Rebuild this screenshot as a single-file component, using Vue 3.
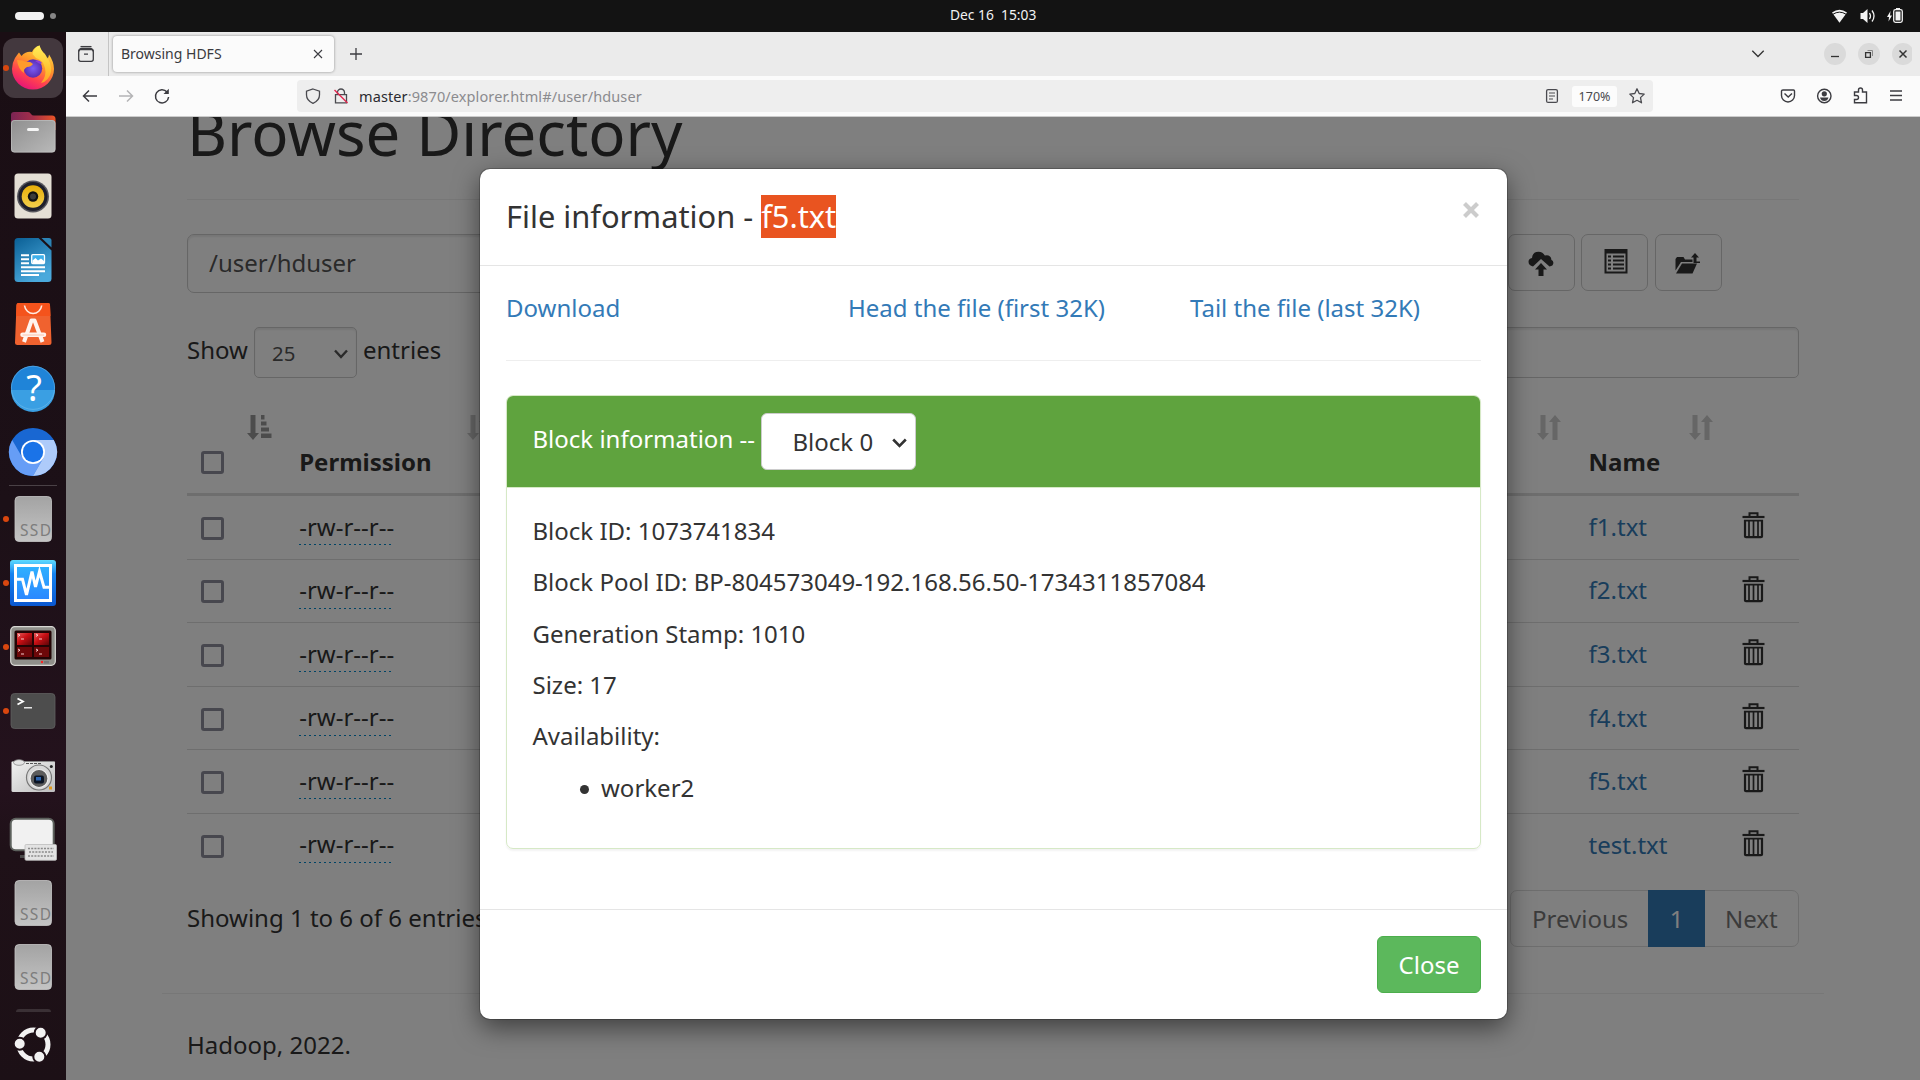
<script setup>
const rows = ['f1.txt', 'f2.txt', 'f3.txt', 'f4.txt', 'f5.txt', 'test.txt']
const info = [
  'Block ID: 1073741834',
  'Block Pool ID: BP-804573049-192.168.56.50-1734311857084',
  'Generation Stamp: 1010',
  'Size: 17',
  'Availability:',
]
const links = ['Download', 'Head the file (first 32K)', 'Tail the file (last 32K)']
const dockTop = ['firefox', 'files', 'rhythmbox', 'writer', 'software', 'help', 'chromium']
const dockBottom = ['ssd', 'vbox', 'terminator', 'terminal', 'camera', 'remote', 'ssd', 'ssd']
const running = ['firefox', 'vbox', 'terminator', 'terminal']
const isRunning = (name, i) => running.includes(name) || (name === 'ssd' && i === 0)
</script>

<template>
  <div class="desktop">
    <svg width="0" height="0" class="defs">
      <defs>
        <linearGradient id="ffx" x1="0.8" y1="0" x2="0.3" y2="1">
          <stop offset="0" stop-color="#ffe84a" /><stop offset="0.4" stop-color="#ff9a2a" />
          <stop offset="0.72" stop-color="#ff4050" /><stop offset="1" stop-color="#e5127a" />
        </linearGradient>
        <linearGradient id="ffy" x1="0" y1="0" x2="0" y2="1">
          <stop offset="0" stop-color="#fff25a" /><stop offset="1" stop-color="#ffb01e" />
        </linearGradient>
        <radialGradient id="ffp"><stop offset="0" stop-color="#7a5cf5" /><stop offset="1" stop-color="#5a2db0" /></radialGradient>
        <linearGradient id="fold" x1="0" y1="0" x2="1" y2="0">
          <stop offset="0" stop-color="#7a2454" /><stop offset="0.5" stop-color="#a52f4a" /><stop offset="1" stop-color="#ea5426" />
        </linearGradient>
        <linearGradient id="grey" x1="0" y1="0" x2="1" y2="1">
          <stop offset="0" stop-color="#8f8f8f" /><stop offset="1" stop-color="#b9b9b9" />
        </linearGradient>
        <linearGradient id="ssdg" x1="0" y1="0" x2="0" y2="1">
          <stop offset="0" stop-color="#a3a3a3" /><stop offset="1" stop-color="#c4c4c4" />
        </linearGradient>
        <linearGradient id="wr" x1="0" y1="0" x2="0.5" y2="1">
          <stop offset="0" stop-color="#0a5f95" /><stop offset="1" stop-color="#4aa9dc" />
        </linearGradient>
        <linearGradient id="yel" x1="0" y1="0" x2="0" y2="1">
          <stop offset="0" stop-color="#e7ae08" /><stop offset="1" stop-color="#f2cf4d" />
        </linearGradient>
        <linearGradient id="vb" x1="0" y1="0" x2="0" y2="1">
          <stop offset="0" stop-color="#5fdcff" /><stop offset="0.3" stop-color="#1683f0" /><stop offset="1" stop-color="#0a57d0" />
        </linearGradient>
        <linearGradient id="vb2" x1="0" y1="0" x2="0" y2="1">
          <stop offset="0" stop-color="#2fb2ff" /><stop offset="1" stop-color="#2a86ff" />
        </linearGradient>
        <linearGradient id="red" x1="0" y1="0" x2="1" y2="1">
          <stop offset="0" stop-color="#e65a5a" /><stop offset="0.45" stop-color="#c80f14" /><stop offset="1" stop-color="#5c0508" />
        </linearGradient>
        <linearGradient id="cam" x1="0" y1="0" x2="1" y2="1">
          <stop offset="0" stop-color="#f2f2f2" /><stop offset="1" stop-color="#bdbdbd" />
        </linearGradient>
      </defs>
    </svg>

    <header class="topbar">
      <span class="pill"></span><span class="dot"></span>
      <span class="clock">Dec 16&nbsp; 15:03</span>
      <svg class="tray" width="80" height="32" viewBox="0 0 80 32">
        <path d="M1 12.5Q8.500 7 16 12.500L8.500 22.700Z" fill="#f2f2f2" />
        <path d="M1.800 13.300Q8.500 9 15.200 13.300" fill="none" stroke="#131313" stroke-width="1" transform="translate(0 1)" />
        <path d="M29.500 13H32L36.500 9V23L32 19H29.500Z" fill="#f2f2f2" />
        <path d="M38.500 13Q40.500 16 38.500 19M41 10.500Q45 16 41 21.500" fill="none" stroke="#f2f2f2" stroke-width="1.300" />
        <path d="M59.500 11L56 17H58L57.500 21.500L61 15.500H59Z" fill="#f2f2f2" />
        <rect x="62.700" y="9.700" width="8.600" height="12.600" rx="1.800" fill="none" stroke="#f2f2f2" stroke-width="1.300" />
        <path d="M64.500 11.500H69.500V20.500H64.500ZM65 8H69V9.500H65Z" fill="#f2f2f2" />
      </svg>
    </header>

    <div class="main">
      <aside class="dock">
        <template v-for="(group, g) in [dockTop, dockBottom]" :key="g">
          <div v-if="g === 1" class="dock-sep"></div>
          <div v-for="(name, i) in group" :key="g + '-' + i" class="dock-item">
            <i v-if="isRunning(name, g === 1 ? i : 9)" class="run"></i>
            <svg width="64" height="64" viewBox="0 0 64 64">
              <g v-if="name === 'firefox'">
                <rect x="2" y="2" width="60" height="60" rx="12" fill="#43383e" />
                <path d="M14 22Q16 19 18 16.500L20.500 20Q25 15 31 16Q33 11 38.500 9.500Q40 15 44 18L46 23Q48 21 48 18.500Q53 26 53 33A21 20.500 0 0 1 11 33Q11 27 14 22Z" fill="url(#ffx)" />
                <path d="M31.500 18Q33 11 38.500 9.500Q40 15 44.500 19Q51 27 50 36Q48 45 40 47Q46 40 44 32Q42 24 35 22Z" fill="url(#ffy)" opacity="0.850" />
                <circle cx="32" cy="32.500" r="9.200" fill="url(#ffp)" />
                <path d="M16 24Q22 24 25 26Q29 25 32 28Q30 31 26 31Q22 33 23 37Q17 33 16 24Z" fill="#ff9b2c" />
                <path d="M34 25Q38 23 41 27Q40 28 38 27.500Z" fill="#8a3fd8" />
              </g>
              <g v-else-if="name === 'files'">
                <path d="M10 19V15Q10 12 13 12H27Q29 12 30 14Q31 15.500 33 15.500H51Q54.500 15.500 54.500 19V30H10Z" fill="url(#fold)" />
                <rect x="10" y="20" width="44.500" height="32.500" rx="3.500" fill="url(#grey)" />
                <rect x="10.500" y="20.500" width="43.500" height="31.500" rx="3" fill="none" stroke="#c9c9c9" stroke-opacity="0.500" />
                <rect x="26" y="28" width="12" height="3" rx="1.500" fill="#f6f6f6" />
              </g>
              <g v-else-if="name === 'rhythmbox'">
                <rect x="13.500" y="9.500" width="37" height="45" rx="3.500" fill="#e4dfd5" />
                <circle cx="32" cy="32.500" r="16" fill="#55555c" />
                <circle cx="32" cy="32.500" r="14.500" fill="#1e1f2b" />
                <circle cx="32" cy="32.500" r="11.300" fill="url(#yel)" />
                <circle cx="32" cy="32.500" r="5.200" fill="#111" />
                <circle cx="32" cy="32.500" r="3" fill="#3b3b3b" />
              </g>
              <g v-else-if="name === 'writer'">
                <path d="M17 10H37.500L50.500 22.500V50.500Q50.500 54 47 54H17Q13.500 54 13.500 50.500V13.500Q13.500 10 17 10Z" fill="url(#wr)" />
                <path d="M40.500 10H48Q50.500 10 50.500 12.500V19.500Z" fill="#2c83b5" />
                <path d="M20 27.200H28M20 31.200H28M20 35.200H28M20 39.200H44M20 43.200H44M20 47H38" stroke="#fff" stroke-width="2" />
                <rect x="30.700" y="26.700" width="12.800" height="8.800" rx="1" fill="#3fb0ea" stroke="#fff" stroke-width="1.300" />
                <path d="M31.500 35V32.500L34.500 30L37 32.500L40 30.500L43 33V35Z" fill="#fff" />
              </g>
              <g v-else-if="name === 'software'">
                <path d="M17.500 11H47Q49 11 49 13L50.500 50.500Q50.500 53 48 53H16.500Q14 53 14 50.500L15.500 13Q15.500 11 17.500 11Z" fill="#f0622f" />
                <path d="M17.500 11H47Q49 11 49 13L49.500 24H15L15.500 13Q15.500 11 17.500 11Z" fill="#f4531c" />
                <path d="M23.500 13.500A8.700 9.500 0 0 0 40.700 13.500" fill="none" stroke="#ffe9df" stroke-width="1.600" />
                <path d="M23 50L30.500 28.500H33.500L41.500 50" fill="none" stroke="#fff3ee" stroke-width="4" stroke-linejoin="round" />
                <path d="M21.500 42.700H43" stroke="#fff3ee" stroke-width="4.500" stroke-linecap="round" />
                <path d="M21.500 43H43" stroke="#f9b69c" stroke-width="0.800" />
              </g>
              <g v-else-if="name === 'help'">
                <circle cx="32" cy="31.800" r="22" fill="#1f84d8" />
                <path d="M10 34A22 22 0 0 0 54 34Z" fill="#3a9fe3" />
                <circle cx="32" cy="31.800" r="21.600" fill="none" stroke="#7cc4f0" stroke-opacity="0.600" stroke-width="0.800" />
                <text x="33" y="45" text-anchor="middle" fill="#fff" font-size="36" font-family="Noto Sans, sans-serif">?</text>
              </g>
              <g v-else-if="name === 'chromium'">
                <circle cx="32" cy="32" r="24" fill="#1967d2" />
                <path d="M11.200 20A24 24 0 0 0 32 56L42.400 38H21.600Z" fill="#669df6" />
                <path d="M32 20H52.800A24 24 0 0 1 32 56L42.400 38Z" fill="#aecbfa" />
                <circle cx="32" cy="32" r="12" fill="#fff" /><circle cx="32" cy="32" r="10.200" fill="#1a73e8" />
              </g>
              <g v-else-if="name === 'ssd'">
                <rect x="14" y="9.500" width="36.500" height="45" rx="4" fill="url(#ssdg)" stroke="#c6c6c6" stroke-width="0.800" />
                <text x="19" y="48.700" fill="#7d7d7d" font-size="15.500" textLength="31" font-family="Noto Sans, sans-serif">SSD</text>
              </g>
              <g v-else-if="name === 'vbox'">
                <rect x="9" y="9" width="46" height="46" rx="3" fill="url(#vb)" />
                <rect x="14.500" y="14.500" width="35" height="35" fill="url(#vb2)" stroke="#fff" stroke-width="3" />
                <path d="M16 28.300H21.500L25.500 44L31 20.500L34.500 36L38.500 20.500L43 36.300H49" fill="none" stroke="#fff" stroke-width="3" />
              </g>
              <g v-else-if="name === 'terminator'">
                <rect x="9.700" y="11.700" width="44.600" height="38.600" rx="4" fill="#8f8f8a" stroke="#d8d8d4" stroke-width="1.200" />
                <rect x="13.500" y="15.500" width="37" height="29" rx="1.500" fill="#230405" />
                <path d="M16 18H31V30H16Z" fill="url(#red)" /><path d="M33 18H48V30H33Z" fill="url(#red)" />
                <path d="M16 32H31V42H16ZM33 32H48V42H33Z" fill="#6d0709" />
                <path d="M17 19l2 1.200l-2 1.200M20 24H23M35 19l2 1.200l-2 1.200M38 24H41M17 34l2 1.200l-2 1.200M20 39H23M35 34l2 1.200l-2 1.200M38 39H41" fill="none" stroke="#f5caca" stroke-width="1" />
                <circle cx="41" cy="47" r="1.200" fill="#f22" /><rect x="43" y="46" width="5" height="2.500" fill="#777" />
              </g>
              <g v-else-if="name === 'terminal'">
                <rect x="10" y="14.500" width="44" height="35" rx="3.500" fill="#4d4d4d" stroke="#606060" stroke-width="0.800" />
                <path d="M16.500 19.500L22 22.500L16.500 25.500" fill="none" stroke="#fff" stroke-width="1.800" /><path d="M23 28.800H31" stroke="#fff" stroke-width="1.300" />
              </g>
              <g v-else-if="name === 'camera'">
                <rect x="10.500" y="18" width="43.500" height="31" rx="1.500" fill="url(#cam)" />
                <path d="M11 18.500H53" stroke="#8a8a8a" /><ellipse cx="18" cy="19.500" rx="5.500" ry="2.800" fill="#e4e4e4" stroke="#888" stroke-width="0.800" />
                <path d="M25 20.500H41" stroke="#555" stroke-dasharray="3 1" />
                <circle cx="38" cy="34.500" r="12.500" fill="#d8d8d8" stroke="#777" stroke-width="1.200" />
                <circle cx="38" cy="35.500" r="9" fill="#5c5c5c" stroke="#eee" stroke-width="1.200" />
                <rect x="33" y="32.500" width="10" height="8" rx="2" fill="#0b1424" /><rect x="35" y="34" width="5" height="3.500" fill="#2f66b0" />
                <circle cx="50.300" cy="23.500" r="1.500" fill="#222" /><rect x="48" y="43.500" width="3" height="3" fill="#e39a1c" />
              </g>
              <g v-else>
                <rect x="9.700" y="11.700" width="43" height="31.500" rx="5" fill="#f1f1f1" stroke="#5c605c" stroke-width="2" />
                <path d="M19 49.500H30" stroke="#4a4a4a" stroke-width="3" />
                <rect x="24" y="37.500" width="31.500" height="15.800" rx="1.200" fill="#e3e3e3" stroke="#bcbcbc" stroke-width="0.800" />
                <path d="M27 41.500H53M28 45H52M27 49H53" stroke="#8b8b8b" stroke-width="1.600" stroke-dasharray="2 1.200" />
              </g>
            </svg>
          </div>
        </template>
        <div class="peek"></div>
        <svg class="apps" width="40" height="40" viewBox="0 0 40 40">
          <circle cx="20.500" cy="20.500" r="14.500" fill="none" stroke="#f2f2f2" stroke-width="5" />
          <g fill="#f2f2f2" stroke="#1f1118" stroke-width="2">
            <circle cx="27.700" cy="8.700" r="6" /><circle cx="6.700" cy="19.700" r="6" /><circle cx="26.300" cy="32.700" r="6" />
          </g>
        </svg>
      </aside>

      <section class="browser">
        <div class="tabbar">
          <div class="view">
            <svg width="18" height="18" viewBox="0 0 18 18" fill="none" stroke="#3c3c41" stroke-width="1.300">
              <path d="M3.500 1.600H14.500" /><rect x="1.700" y="4.700" width="14.600" height="11.600" rx="2" /><path d="M1.700 6.500Q2 3.500 5 3.500H13Q16 3.500 16.300 6.500M7 9.200H11" />
            </svg>
          </div>
          <div class="tab">
            <span>Browsing HDFS</span>
            <svg width="10" height="10" viewBox="0 0 10 10" stroke="#3c3c41" stroke-width="1.100"><path d="M1 1L9 9M9 1L1 9" /></svg>
          </div>
          <svg class="plus" width="14" height="14" viewBox="0 0 14 14" stroke="#3c3c41" stroke-width="1.300"><path d="M7 1V13M1 7H13" /></svg>
          <svg class="winctl" width="170" height="44" viewBox="0 0 170 44" fill="none" stroke="#333" stroke-width="1.300">
            <path d="M10.300 18.700L16 24.500L21.700 18.700" />
            <g fill="#dadada" stroke="none"><circle cx="93" cy="22" r="11" /><circle cx="127" cy="22" r="11" /><circle cx="161" cy="22" r="11" /></g>
            <path d="M89 24.500H97" /><path d="M123.600 20.600H128.400V25.400H123.600Z" /><path d="M125.500 18.500H130.500V24" stroke="#888" stroke-width="1" />
            <path d="M157.500 18.500L164.500 25.500M164.500 18.500L157.500 25.500" stroke-width="1.500" />
          </svg>
        </div>
        <div class="navbar">
          <svg class="navbtns" width="120" height="40" viewBox="0 0 120 40" fill="none" stroke="#3c3c41" stroke-width="1.500">
            <path d="M17.500 20H31M23 14.500L17.500 20L23 25.500" />
            <path d="M53 20H66.500M61 14.500L66.500 20L61 25.500" stroke="#b4b4b6" />
            <path d="M101 16A6.600 6.600 0 1 0 102.600 21" /><path d="M102.800 12.700V18H97.500Z" fill="#3c3c41" stroke="none" />
          </svg>
          <div class="urlbar">
            <svg width="62" height="32" viewBox="0 0 62 32" fill="none" stroke="#4a4a4f" stroke-width="1.300">
              <path d="M16 9L22.500 11.200V15Q22.500 20.500 16 23.300Q9.500 20.500 9.500 15V11.200Z" />
              <path d="M40.500 14.500V12.500A3.500 3.500 0 0 1 47.500 12.500V14.500M38.500 14.700H49.500V22.800H38.500Z" />
              <path d="M37.500 10L50.500 23" stroke="#e22850" stroke-width="1.400" />
            </svg>
            <div class="url"><span class="host">master</span><span>:9870/explorer.html#/user/hduser</span></div>
            <svg class="reader" width="14" height="16" viewBox="0 0 14 16" fill="none" stroke="#4a4a4f" stroke-width="1.300"><rect x="1.600" y="1.600" width="10.800" height="12.800" rx="1.500" /><path d="M4 5H10M4 8H10M4 11H8" stroke-width="1.100" /></svg>
            <span class="zoom">170%</span>
            <svg class="star" width="18" height="18" viewBox="0 0 18 18" fill="none" stroke="#4a4a4f" stroke-width="1.300" stroke-linejoin="round"><path d="M9 1.800L11.200 6.500L16.200 7.100L12.500 10.600L13.500 15.800L9 13.300L4.500 15.800L5.500 10.600L1.800 7.100L6.800 6.500Z" /></svg>
          </div>
          <svg class="tools" width="140" height="40" viewBox="0 0 140 40" fill="none" stroke="#3c3c41" stroke-width="1.400">
            <path d="M23 14H33.500Q34.500 14 34.500 15V19.500A6.300 6.300 0 0 1 21.500 19.500V15Q21.500 14 23 14ZM24.500 17.500L28.200 21L32 17.500" />
            <circle cx="64.300" cy="20" r="6.700" /><circle cx="64.300" cy="17.800" r="2.600" fill="#3c3c41" stroke="none" /><path d="M60 21.500H68.500Q67.500 25 64.300 25Q61 25 60 21.500Z" fill="#3c3c41" stroke="none" />
            <path d="M94.500 16H98.500V14A2 2 0 0 1 102.500 14V16H106.500V26.700H94.500V23.500H96.500A2 2 0 0 0 96.500 19.500H94.500Z" />
            <path d="M130 15H142M130 19.500H142M130 24H142" />
          </svg>
        </div>

        <div class="viewport">
          <div class="page">
            <h1>Browse Directory</h1>
            <div class="toolbar">
              <div class="path">/user/hduser</div>
              <div class="btn">
                <svg width="26" height="26" viewBox="0 0 26 26" fill="#333"><path d="M5 15.500Q0.500 14.500 0.500 10.800Q0.600 7.500 4 7Q4.500 0.800 10.500 0.700Q15 0.700 16.800 4.500Q20 3.600 22 5.400Q23.500 6.800 23.300 8.700Q25.500 9.800 25.400 12Q25.200 15 21.500 15.500L13 8Z" /><path d="M13 12L19 18.500H15.500V25H10.500V18.500H7Z" /></svg>
              </div>
              <div class="btn b2">
                <svg width="24" height="25" viewBox="0 0 24 25"><path fill="#333" fill-rule="evenodd" d="M0.500 0H23.500V24.500H0.500ZM2.500 4.500H21.500V22.500H2.500Z" /><path d="M4 7.500H7M4 11.500H7M4 15.500H7M4 19.500H7M9 7.500H20M9 11.500H20M9 15.500H20M9 19.500H20" stroke="#333" stroke-width="2" /></svg>
              </div>
              <div class="btn b3">
                <svg width="25" height="21" viewBox="0 0 25 21" fill="#333"><path d="M0.500 17V6L2 4H8.500L10 6.500H17.500V9H6L0.500 17.500Z" /><path d="M7 10.500H22L17.500 20.500H1Z" /><path d="M20 0L24 4.500H21.500V8.500H25V10H18.500V4.500H16Z" /></svg>
              </div>
            </div>
            <div class="filter">
              <span>Show</span>
              <div class="select">25
                <svg width="14" height="10" viewBox="0 0 14 10" fill="none" stroke="#555" stroke-width="2.400"><path d="M1 1.500L7 8L13 1.500" /></svg>
              </div>
              <span>entries</span>
              <div class="search"></div>
            </div>

            <div class="thead">
              <div class="c1"><i class="box"></i>
                <svg class="sort asc" width="25" height="25" viewBox="0 0 25 25" fill="#999"><path d="M3.500 0H8.500V18H12L6 25L0 18H3.500ZM14 0H17.500V4.500H14ZM14 6.500H19.500V10.500H14ZM14 12.500H22V16.500H14ZM14 18.500H24.500V23H14Z" /></svg>
              </div>
              <div class="c2">Permission<svg class="sort" width="24" height="25" viewBox="0 0 24 25" fill="#ccc"><path d="M3.500 0H8.500V18H12L6 25L0 18H3.500ZM15.500 25H20.500V7H24L18 0L12 7H15.500Z" /></svg></div>
              <div class="gap"><svg class="sort" width="24" height="25" viewBox="0 0 24 25" fill="#ccc"><path d="M3.500 0H8.500V18H12L6 25L0 18H3.500ZM15.500 25H20.500V7H24L18 0L12 7H15.500Z" /></svg></div>
              <div class="c8">Name<svg class="sort" width="24" height="25" viewBox="0 0 24 25" fill="#ccc"><path d="M3.500 0H8.500V18H12L6 25L0 18H3.500ZM15.500 25H20.500V7H24L18 0L12 7H15.500Z" /></svg></div>
              <div class="c9"></div>
            </div>
            <div v-for="f in rows" :key="f" class="row">
              <div class="c1"><i class="box"></i></div>
              <div class="c2"><span class="perm">-rw-r--r--</span></div>
              <div class="gap"></div>
              <div class="c8 name">{{ f }}</div>
              <div class="c9">
                <svg width="23" height="27" viewBox="0 0 23 27" fill="none" stroke="#333"><path d="M7.500 4.500V1.200H15.500V4.500" stroke-width="2" /><path d="M0.500 5H22.500" stroke-width="2.200" /><path d="M3 8V24.500Q3 25.200 4 25.200H19Q20 25.200 20 24.500V8" stroke-width="2.200" /><path d="M2 8.700H21M7 9V24M11.500 9V24M16 9V24" stroke-width="1.700" /></svg>
              </div>
            </div>

            <div class="foot">
              <span>Showing 1 to 6 of 6 entries</span>
              <div class="pager"><span>Previous</span><span class="on">1</span><span>Next</span></div>
            </div>
            <div class="footline"></div>
            <div class="hadoop">Hadoop, 2022.</div>
          </div>

          <div class="backdrop">
            <div class="modal">
              <div class="mhead">
                <span>File information - <mark>f5.txt</mark></span>
                <svg width="16" height="16" viewBox="0 0 16 16" stroke="#ccc" stroke-width="4.200"><path d="M1.500 1.500L14.500 14.500M14.500 1.500L1.500 14.500" /></svg>
              </div>
              <div class="mbody">
                <div class="links"><a v-for="l in links" :key="l">{{ l }}</a></div>
                <div class="panel">
                  <div class="phead">
                    <span>Block information --</span>
                    <div class="bsel">Block 0
                      <svg width="15" height="10" viewBox="0 0 15 10" fill="none" stroke="#333" stroke-width="2.600"><path d="M1.200 1.500L7.500 8L13.800 1.500" /></svg>
                    </div>
                  </div>
                  <div class="pbody">
                    <p v-for="t in info" :key="t">{{ t }}</p>
                    <div class="worker"><i></i>worker2</div>
                  </div>
                </div>
              </div>
              <div class="mfoot"><div class="close">Close</div></div>
            </div>
          </div>
        </div>
      </section>
    </div>
  </div>
</template>

<style>
body { margin: 0; overflow: hidden; }
</style>

<style scoped>
.desktop, .desktop * { box-sizing: border-box; }
.desktop { width: 1920px; height: 1080px; overflow: hidden; display: flex; flex-direction: column; font-family: "Noto Sans", sans-serif; background: #131313; }
.desktop svg { display: block; flex: none; }
.defs { position: absolute; }
.topbar { height: 32px; flex: none; display: flex; align-items: center; padding-left: 15px; background: #131313; color: #f2f2f2; }
.pill { width: 29px; height: 8px; border-radius: 4px; background: #f2f2f2; }
.dot { width: 6px; height: 6px; border-radius: 3px; margin-left: 6px; background: #868686; }
.clock { margin-left: 894px; width: 130px; font-size: 13.8px; line-height: 30px; padding-bottom: 2px; white-space: nowrap; }
.tray { margin-left: 751px; }
.main { flex: 1; min-height: 0; display: flex; }
.dock { width: 66px; flex: none; padding-top: 4px; background: linear-gradient(#1a0e14 0%, #1c1017 45%, #24121d 72%, #1f1118 78%, #1c1016 100%); display: flex; flex-direction: column; align-items: center; }
.dock-item { width: 66px; height: 64px; flex: none; display: flex; justify-content: center; position: relative; }
.run { position: absolute; left: 3px; top: 29px; width: 6px; height: 6px; border-radius: 3px; background: #d9470f; z-index: 1; }
.dock-sep { width: 48px; height: 3px; flex: none; border-top: 1px solid transparent; border-bottom: 1px solid transparent; background: #4a4146; background-clip: padding-box; }
.peek { width: 35px; height: 3px; margin-top: 10px; border-radius: 4px 4px 0 0; background: #3a3035; flex: none; }
.apps { margin-top: 12px; }
.browser { flex: 1; min-width: 0; display: flex; flex-direction: column; }
.tabbar { height: 44px; flex: none; display: flex; align-items: center; background: #ebebeb; }
.view { width: 43px; height: 44px; border-right: 1px solid #c4c4c4; display: flex; align-items: center; padding-left: 11px; }
.tab { width: 221px; height: 36px; margin-left: 4px; border-radius: 4px; background: #fbfbfb; box-shadow: 0 0 3px rgba(0,0,0,.4); display: flex; align-items: center; justify-content: space-between; padding: 0 11px 0 8px; font-size: 14px; color: #3a3a3e; white-space: nowrap; }
.tab span { padding-bottom: 1px; }
.plus { margin-left: 14.500px; }
.winctl { margin-left: auto; margin-right: 8px; }
.navbar { height: 41px; flex: none; display: flex; align-items: flex-start; background: #fbfbfb; border-bottom: 1px solid #ccc; }
.urlbar { width: 1356px; height: 32px; margin: 4px 0 0 111px; border-radius: 4px; background: #eee; display: flex; align-items: center; }
.url { width: 1186px; display: flex; font-size: 14.500px; letter-spacing: 0.110px; color: #8b8b8e; white-space: nowrap; line-height: 30px; padding-bottom: 1px; }
.host { color: #2b2b30; }
.zoom { width: 45px; height: 21px; margin-left: 13px; border-radius: 3px; background: #fcfcfc; color: #4a4a4f; font-size: 12.500px; line-height: 21px; text-align: center; }
.star { margin-left: 11px; }
.tools { margin-left: 107px; overflow: visible; }
.viewport { flex: 1; min-height: 0; position: relative; overflow: hidden; background: #fff; font-size: 24px; line-height: 34px; color: #333; white-space: nowrap; }
.page { width: 1612px; margin-left: 121px; display: flex; flex-direction: column; }
h1 { margin: -18.400px 0 0; height: 101.400px; font-size: 61.700px; line-height: 67.300px; font-weight: 400; border-bottom: 1px solid #eee; flex: none; }
.toolbar { height: 58px; margin-top: 34px; display: flex; }
.path { width: 1280px; height: 59px; border: 1px solid #ccc; border-radius: 7px; padding: 11px 21px; color: #555; box-shadow: inset 0 2px 2px rgba(0,0,0,.075); }
.btn { width: 67px; height: 57px; margin-left: 41px; border: 1px solid #ccc; border-radius: 7px; display: flex; justify-content: center; padding-top: 16px; padding-right: 1px; }
.b2 { margin-left: 6px; padding: 14px 0 0 2px; }
.b3 { margin-left: 7px; padding: 18px 3px 0 0; }
.filter { height: 51px; margin-top: 35px; display: flex; }
.filter span { padding-top: 5.500px; }
.filter > span:first-child { width: 67px; }
.select { width: 103px; height: 51px; margin: 0 6px 0 0; border: 1px solid #ccc; border-radius: 5px; padding: 7.500px 8px 0 17px; font-size: 20.400px; line-height: 34px; color: #555; display: flex; justify-content: space-between; box-shadow: inset 0 2px 2px rgba(0,0,0,.075); }
.select svg { margin-top: 13px; }
.search { width: 329px; height: 51px; margin-left: auto; border: 1px solid #ccc; border-radius: 5px; box-shadow: inset 0 2px 2px rgba(0,0,0,.075); }
.thead { height: 118px; display: flex; border-bottom: 3px solid #ddd; font-weight: 700; }
.thead > div { padding-top: 66.500px; position: relative; }
.sort { position: absolute; right: 14px; top: 37px; }
.asc { right: 13.500px; }
.c1 { width: 98.600px; padding-left: 14px; }
.c2 { width: 219px; padding-left: 13.600px; }
.c8 { width: 152px; padding-left: 13.600px; }
.gap { flex: 1; }
.c9 { width: 72px; }
.box { display: block; width: 23px; height: 23px; border: 3px solid #8f8f9d; border-radius: 3px; }
.thead .box { margin-top: 6.500px; }
.row { height: 63.600px; display: flex; border-bottom: 1px solid #ddd; padding-top: 13.500px; }
.row:nth-last-child(4) { border-bottom-color: transparent; }
.row .box { margin-top: 7.300px; }
.perm { display: block; width: 95px; height: 35.500px; background: repeating-linear-gradient(90deg, #08c 0 2px, transparent 2px 5px) left bottom / 100% 1px no-repeat; }
.name { color: #337ab7; padding-top: 0.400px; }
.c9 svg { margin: 2.500px 0 0 15px; }
.foot { height: 57px; margin-top: 12.400px; display: flex; justify-content: space-between; }
.foot > span { padding-top: 11px; }
.pager { width: 289px; height: 57px; display: flex; border: 1px solid #ddd; border-radius: 7px; color: #777; line-height: 56px; padding-left: 21px; }
.pager span { width: 117px; }
.pager .on { width: 57px; height: 57px; margin: -1px 0 0 -1px; background: #337ab7; color: #fff; text-align: center; line-height: 58px; }
.pager span:last-child { padding-left: 20px; width: auto; }
.footline { width: 1662px; height: 1px; margin: 46px 0 0 -25px; background: #eee; flex: none; }
.hadoop { margin-top: 34px; }
.backdrop { position: absolute; inset: 0; background: rgba(0,0,0,.5); }
.modal { width: 1027px; height: 850px; margin: 52px 0 0 414px; border-radius: 10px; background: #fff; box-shadow: 0 8.500px 25.500px rgba(0,0,0,.5), 0 0 0 1px rgba(0,0,0,.2); background-clip: padding-box; display: flex; flex-direction: column; }
.mhead { height: 97px; padding: 25.500px 28.500px 0 26px; border-bottom: 1px solid #e5e5e5; font-size: 30.840px; line-height: 43.700px; display: flex; justify-content: space-between; }
.mhead svg { margin-top: 7.500px; }
mark { background: #e95420; color: #fff; padding-bottom: 1px; }
.mbody { height: 643px; padding: 24.500px 26px 0; }
.links { height: 70px; display: flex; border-bottom: 1px solid #eee; color: #337ab7; }
.links a { width: 342px; flex: none; }
.panel { margin-top: 34.500px; height: 454px; border: 1px solid #d6e9c6; border-radius: 7px; box-shadow: 0 2px 2px rgba(0,0,0,.05); overflow: hidden; }
.phead { height: 92px; background: #5fa33e; border-bottom: 1px solid #d6e9c6; padding: 17px 25px; display: flex; color: #fff; }
.phead span { width: 229px; padding: 9px 0 0 0.500px; }
.bsel { width: 155px; height: 57px; border: 1px solid #ccc; border-radius: 6px; background: #fff; color: #333; display: flex; justify-content: space-between; padding: 11px 8px 0 30.500px; }
.bsel svg { margin-top: 13px; }
.pbody { padding: 26.200px 25.500px 0; }
.pbody p { margin: 0 0 17.300px; }
.worker { display: flex; align-items: center; }
.worker i { width: 9px; height: 9px; border-radius: 5px; background: #333; margin: 3px 12px 0 47.500px; }
.mfoot { flex: 1; border-top: 1px solid #e5e5e5; padding: 26px 26px 0; display: flex; justify-content: flex-end; }
.close { width: 104px; height: 57px; border: 1px solid #4cae4c; border-radius: 6px; background: #5cb85c; color: #fff; line-height: 56.500px; text-align: center; }
</style>
